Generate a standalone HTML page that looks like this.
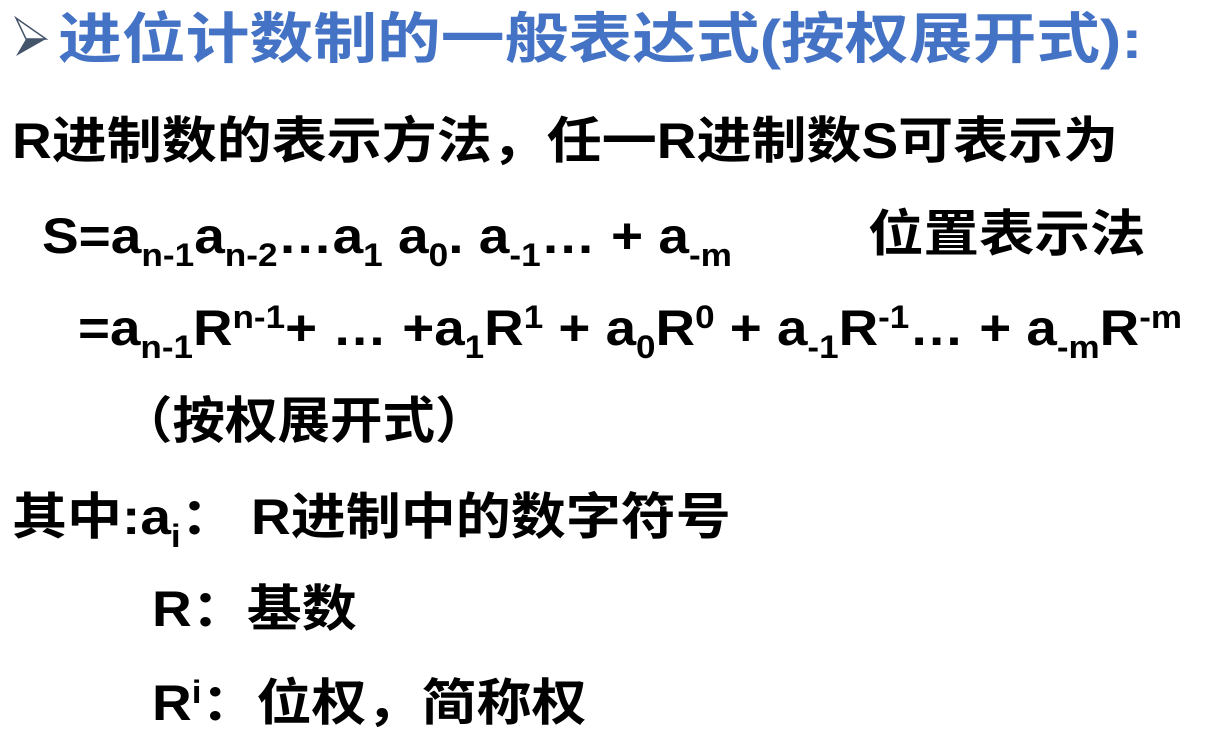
<!DOCTYPE html>
<html><head><meta charset="utf-8"><style>
html,body{margin:0;padding:0;background:#fff;width:1208px;height:736px;overflow:hidden}
.l{position:absolute;white-space:nowrap;font-family:"Liberation Sans","Noto Sans CJK SC",sans-serif;font-weight:bold;font-size:50px;line-height:50px;color:#000;transform:scaleX(1.1);transform-origin:left}
sub,sup{font-size:32px;line-height:0;font-weight:bold}
sub{vertical-align:-13px}
sup{vertical-align:17px}
</style></head><body>
<svg style="position:absolute;left:14px;top:16px" width="34" height="42" viewBox="0 0 34 42"><polygon points="2,2 32,23 2,40 12,23" fill="#44546a"/><polygon points="2,2 32,23 12,23" fill="#fff" stroke="#44546a" stroke-width="1.5"/></svg>
<div class="l" style="left:58px;top:10px;font-size:55px;line-height:58px;color:#4472c4;transform:scaleX(1.16)">进位计数制的一般表达式(按权展开式):</div>
<div class="l" style="left:12px;top:116px">R进制数的表示方法，任一R进制数S可表示为</div>
<div class="l" style="left:42px;top:211px">S=a<sub>n-1</sub>a<sub>n-2</sub>…a<sub>1</sub> a<sub>0</sub>. a<sub>-1</sub>… + a<sub>-m</sub></div>
<div class="l" style="left:868px;top:209px;transform:scaleX(1.11)">位置表示法</div>
<div class="l" style="left:78px;top:303px;transform:scaleX(1.095)">=a<sub>n-1</sub>R<sup>n-1</sup>+ … +a<sub>1</sub>R<sup>1</sup> + a<sub>0</sub>R<sup>0</sup> + a<sub>-1</sub>R<sup>-1</sup>… + a<sub>-m</sub>R<sup>-m</sup></div>
<div class="l" style="left:120px;top:396px;transform:scaleX(1.05)">（按权展开式）</div>
<div class="l" style="left:12px;top:492px">其中:a<sub>i</sub>： R进制中的数字符号</div>
<div class="l" style="left:152px;top:584px">R：基数</div>
<div class="l" style="left:152px;top:678px">R<sup>i</sup>：位权，简称权</div>
</body></html>
